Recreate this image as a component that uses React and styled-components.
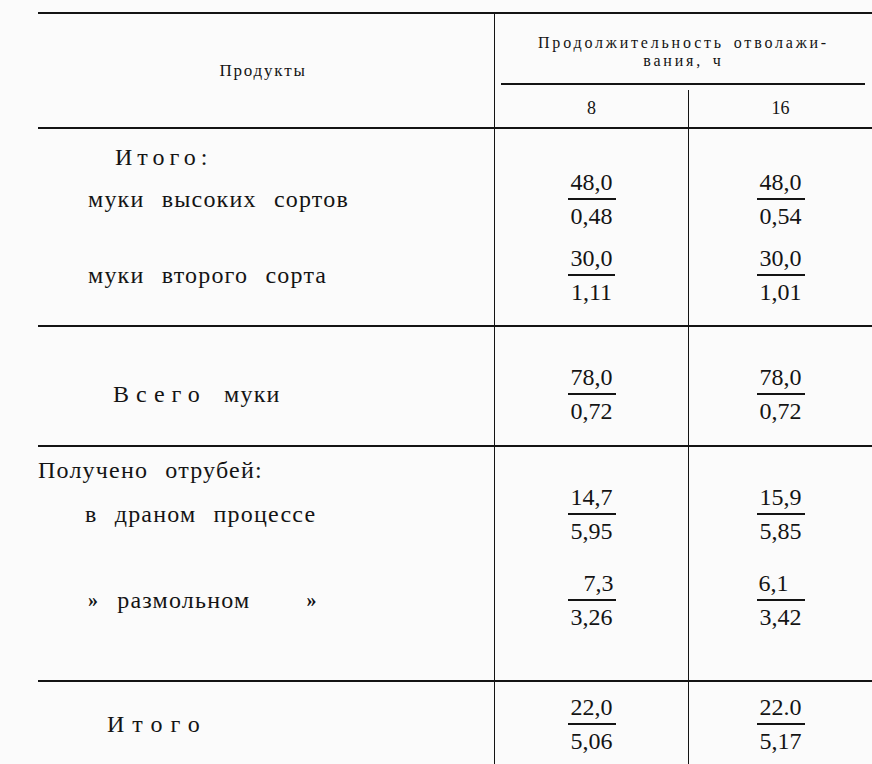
import React from 'react';
import styled, { createGlobalStyle } from 'styled-components';

const ink = '#141414';
const serif = `"Liberation Serif", "Times New Roman", Times, "DejaVu Serif", serif`;

const GlobalStyle = createGlobalStyle`
  html, body {
    margin: 0;
    background: #fbfbfb;
    color: #141414;
    font-family: ${serif};
  }
`;

const sections = [
  {
    title: { text: 'Итого:', indent: 77, spacing: 5, h: 40, pt: 16 },
    rows: [
      { label: 'муки высоких сортов', indent: 50, pt: 0, values: [['48,0', '0,48'], ['48,0', '0,54']] },
      { label: 'муки второго сорта', indent: 50, pt: 16, pb: 20, values: [['30,0', '1,11'], ['30,0', '1,01']] },
    ],
  },
  {
    rows: [
      { label: 'Всего муки', indent: 75, spacedWord: 'Всего', pt: 37, pb: 21, values: [['78,0', '0,72'], ['78,0', '0,72']] },
    ],
  },
  {
    title: { text: 'Получено отрубей:', indent: 0, h: 37, pt: 11 },
    rows: [
      { label: 'в драном процессе', indent: 47, pt: 0, values: [['14,7', '5,95'], ['15,9', '5,85']] },
      { ditto: 'размольном', indent: 50, pt: 26, pb: 50, values: [['7,3', '3,26', 'right'], ['6,1', '3,42', 'left']] },
    ],
  },
  {
    rows: [
      { label: 'Итого', indent: 69, spacing: 8, pt: 12, pb: 30, values: [['22,0', '5,06'], ['22.0', '5,17']] },
    ],
  },
];

const App = () => (
  <>
    <GlobalStyle />
    <Page>
      <Table>
        <Header>
          <HeadLabel>Продукты</HeadLabel>
          <HeadRight>
            <HeadTitle>
              <span>Продолжительность отволажи-</span>
              <span>вания, ч</span>
            </HeadTitle>
            <HeadRule />
            <HeadCols>
              <HeadNum>8</HeadNum>
              <HeadNum $divider>16</HeadNum>
            </HeadCols>
          </HeadRight>
        </Header>

        {sections.map((section, i) => (
          <Section key={i}>
            {section.title && (
              <Row $h={section.title.h} $pt={section.title.pt}>
                <Label $indent={section.title.indent} $spacing={section.title.spacing} $top>
                  {section.title.text}
                </Label>
                <Value />
                <Value />
              </Row>
            )}
            {section.rows.map((row, j) => (
              <Row key={j} $pt={row.pt} $pb={row.pb}>
                <Label $indent={row.indent} $spacing={row.spacing}>
                  {row.ditto ? (
                    <>
                      <Quote>»</Quote>
                      <DittoWord>{row.ditto}</DittoWord>
                      <Quote>»</Quote>
                    </>
                  ) : row.spacedWord ? (
                    <>
                      <Spaced>{row.spacedWord}</Spaced>
                      {row.label.slice(row.spacedWord.length)}
                    </>
                  ) : (
                    row.label
                  )}
                </Label>
                {row.values.map(([num, den, align], k) => (
                  <Value key={k}>
                    <Fraction>
                      <Num $align={align}>{num}</Num>
                      <Bar />
                      <Den>{den}</Den>
                    </Fraction>
                  </Value>
                ))}
              </Row>
            ))}
          </Section>
        ))}
      </Table>
    </Page>
  </>
);

const Page = styled.div`
  height: 764px;
  box-sizing: border-box;
  padding: 12px 0 0 38px;
  overflow: hidden;
  font-family: ${serif};
`;

const Table = styled.div`
  width: 834px;
`;

const Header = styled.div`
  display: grid;
  grid-template-columns: 456px 1fr;
  height: 115px;
  box-sizing: border-box;
  border-top: 2px solid ${ink};
`;

const HeadLabel = styled.div`
  display: flex;
  align-items: center;
  justify-content: center;
  padding-right: 6px;
  font-size: 17px;
  letter-spacing: 1.8px;
`;

const HeadRight = styled.div`
  display: flex;
  flex-direction: column;
  border-left: 1px solid ${ink};
`;

const HeadTitle = styled.div`
  height: 69px;
  box-sizing: border-box;
  padding-top: 6px;
  display: flex;
  flex-direction: column;
  justify-content: center;
  align-items: center;
  font-size: 16px;
  line-height: 18px;
  letter-spacing: 2.8px;
  word-spacing: 3px;
`;

const HeadRule = styled.div`
  height: 2px;
  margin: 0 7px 0 6px;
  background: ${ink};
`;

const HeadCols = styled.div`
  flex: 1;
  display: grid;
  grid-template-columns: 193px 1fr;
`;

const HeadNum = styled.div`
  display: flex;
  align-items: center;
  justify-content: center;
  padding-top: ${(p) => (p.$divider ? 0 : 5)}px;
  margin-top: ${(p) => (p.$divider ? 5 : 0)}px;
  border-left: ${(p) => (p.$divider ? `1px solid ${ink}` : 'none')};
  font-size: 18px;
`;

const Section = styled.div`
  border-top: 2px solid ${ink};
`;

const Row = styled.div`
  display: grid;
  grid-template-columns: 456px 194px 1fr;
  min-height: ${(p) => p.$h || 0}px;

  & > * {
    box-sizing: border-box;
    padding-top: ${(p) => p.$pt || 0}px;
    padding-bottom: ${(p) => p.$pb || 0}px;
  }
`;

const Label = styled.div`
  display: flex;
  align-items: ${(p) => (p.$top ? 'flex-start' : 'center')};
  padding-left: ${(p) => p.$indent}px;
  font-size: 24px;
  line-height: 24px;
  letter-spacing: ${(p) => p.$spacing ?? 1.2}px;
  word-spacing: 10px;
  white-space: pre;
`;

const Spaced = styled.span`
  letter-spacing: 7px;
`;

const Quote = styled.span`
  font-weight: bold;
  font-size: 20px;
`;

const DittoWord = styled.span`
  margin: 0 56px 0 18px;
`;

const Value = styled.div`
  display: flex;
  align-items: center;
  justify-content: center;
  border-left: 1px solid ${ink};
`;

const Fraction = styled.div`
  display: inline-flex;
  flex-direction: column;
  font-size: 24px;
  line-height: 26px;
`;

const Num = styled.div`
  padding: 0 2px;
  text-align: ${(p) => p.$align || 'center'};
`;

const Bar = styled.div`
  height: 2px;
  margin: 3px 0;
  background: ${ink};
`;

const Den = styled.div`
  padding: 0 3px;
  text-align: center;
`;

export default App;
